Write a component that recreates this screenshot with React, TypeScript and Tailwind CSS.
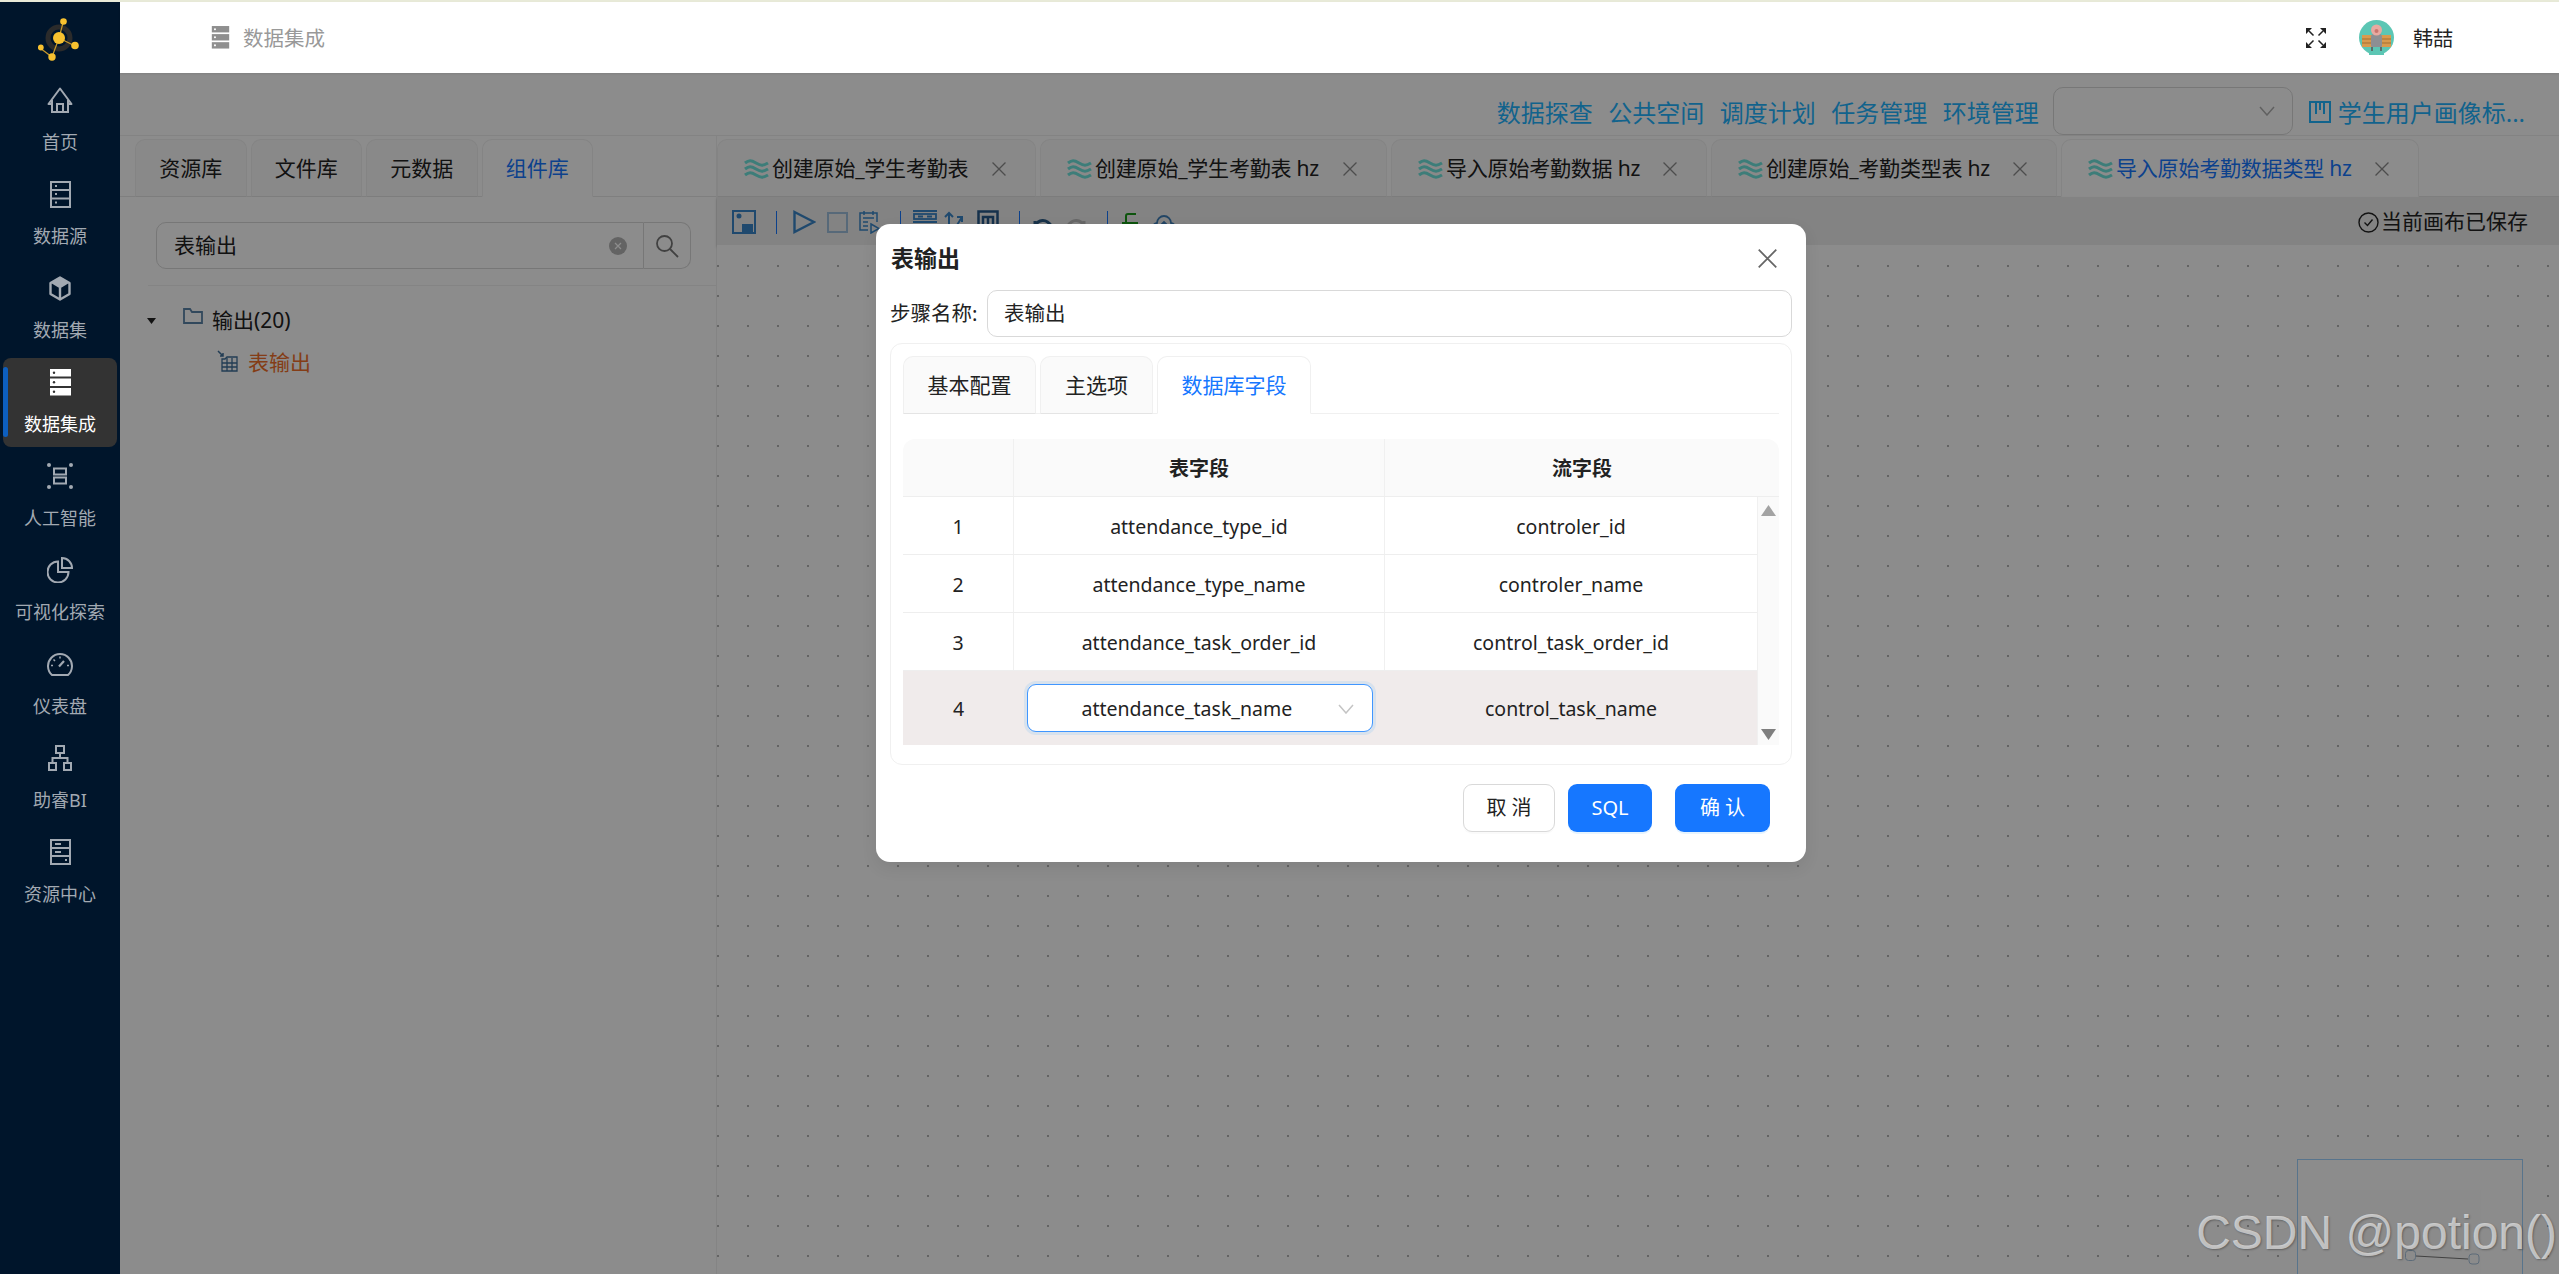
import React from "react";

const FONT = "font-['Noto_Sans','Noto_Sans_CJK_SC',sans-serif]";
const NAV_STROKE = "#a2a9b2";
const TOOL = "#3a86c8";
const LINK = "text-[#1fb4ff]";

function Logo() {
  return (
    <svg width="44" height="46" viewBox="0 0 44 46" fill="none">
      <circle cx="21" cy="22" r="11" stroke="#2b2b2b" strokeWidth="5" />
      <g stroke="#c99a2a" strokeWidth="1.2">
        <path d="M21 22 25.5 5" />
        <path d="M21 22 37 30" />
        <path d="M21 22 14 41 2 32" />
      </g>
      <g fill="#f7c12f">
        <circle cx="21" cy="22" r="6" />
        <circle cx="25.5" cy="5.5" r="3.3" />
        <circle cx="37" cy="29.5" r="3.8" />
        <circle cx="14" cy="41" r="3.7" />
        <circle cx="2.8" cy="31.5" r="2.9" />
      </g>
    </svg>
  );
}

function HomeIcon() {
  return (
    <svg width="26" height="26" viewBox="0 0 26 26" fill="none" stroke={NAV_STROKE} strokeWidth="2">
      <path d="M5 17H1.500L13 1.500 24.500 17H21" strokeLinejoin="round" />
      <path d="M5 13v12h16V13" />
      <path d="M10 25v-8h6v8" />
    </svg>
  );
}

function SourceIcon() {
  return (
    <svg width="21" height="27" viewBox="0 0 21 27" fill="none" stroke={NAV_STROKE} strokeWidth="2">
      <rect x="1" y="1" width="19" height="25" />
      <path d="M1 9h19M1 17.500h19" />
      <path d="M5 5h2M5 13h2M5 21.500h2" />
    </svg>
  );
}

function BoxIcon() {
  return (
    <svg width="22" height="25" viewBox="0 0 22 25" fill="none" stroke={NAV_STROKE} strokeWidth="2.400">
      <path d="M11 1.500 20.500 7v11L11 23.500 1.500 18V7z" strokeLinejoin="round" />
      <path d="M11 1.500 20 7l-9 5.500L2 7z" fill={NAV_STROKE} stroke="none" />
      <path d="M11 12v11" />
    </svg>
  );
}

function StackIcon({ color = "#fff", dot = "#333" }: { color?: string; dot?: string }) {
  return (
    <svg width="21" height="27" viewBox="0 0 21 27">
      {[0, 9.5, 19].map((y) => (
        <g key={y}>
          <rect x="0" y={y} width="21" height="7.500" fill={color} />
          <circle cx="4" cy={y + 3.75} r="1.200" fill={dot} />
        </g>
      ))}
    </svg>
  );
}

function AiIcon() {
  return (
    <svg width="26" height="26" viewBox="0 0 26 26" fill="none" stroke={NAV_STROKE}>
      <g fill={NAV_STROKE} stroke="none">
        <circle cx="2" cy="2" r="2" />
        <circle cx="24" cy="2" r="2" />
        <circle cx="2" cy="24" r="2" />
        <circle cx="24" cy="24" r="2" />
      </g>
      <rect x="7" y="5.500" width="12" height="6" strokeWidth="2" />
      <rect x="7" y="14.500" width="12" height="6" strokeWidth="2" />
    </svg>
  );
}

function PieIcon() {
  return (
    <svg width="26" height="26" viewBox="0 0 26 26" fill="none" stroke={NAV_STROKE} strokeWidth="2">
      <path d="M11 4.500a10.500 10.500 0 1 0 10.500 10.500H11z" />
      <path d="M15 1a10 10 0 0 1 10 10H15z" />
    </svg>
  );
}

function GaugeIcon() {
  return (
    <svg width="26" height="24" viewBox="0 0 26 24" fill="none" stroke={NAV_STROKE} strokeWidth="2">
      <path d="M5 23a12 12 0 1 1 16 0z" strokeLinejoin="round" />
      <path d="M12 14.500 17 9" strokeWidth="2.200" />
      <path d="M13 4.500v2M6.500 7.500l1.500 1.500M4 13.500h2M20 13.500h2" strokeWidth="1.500" />
    </svg>
  );
}

function TreeIcon() {
  return (
    <svg width="24" height="26" viewBox="0 0 24 26" fill="none" stroke={NAV_STROKE} strokeWidth="2">
      <rect x="8" y="1" width="8" height="7" />
      <rect x="1" y="18" width="7" height="7" />
      <rect x="16" y="18" width="7" height="7" />
      <path d="M12 8v5M4.500 18v-5h15v5" />
    </svg>
  );
}

function ResourceIcon() {
  return (
    <svg width="21" height="26" viewBox="0 0 21 26" fill="none" stroke={NAV_STROKE} strokeWidth="2">
      <rect x="1" y="1" width="19" height="24" />
      <path d="M1 9h19M1 17h19" />
      <path d="M5 5h6M5 13h6M15 21h2" />
    </svg>
  );
}

const NAV = [
  { label: "首页", icon: <HomeIcon /> },
  { label: "数据源", icon: <SourceIcon /> },
  { label: "数据集", icon: <BoxIcon /> },
  { label: "数据集成", icon: <StackIcon />, active: true },
  { label: "人工智能", icon: <AiIcon /> },
  { label: "可视化探索", icon: <PieIcon /> },
  { label: "仪表盘", icon: <GaugeIcon /> },
  { label: "助睿BI", icon: <TreeIcon /> },
  { label: "资源中心", icon: <ResourceIcon /> },
];

function Sidebar() {
  return (
    <aside className="flex w-[120px] shrink-0 flex-col gap-[5px] bg-[#00152b]">
      <div className="flex h-[69px] shrink-0 items-center justify-center pt-[4px]">
        <Logo />
      </div>
      {NAV.map((item) => (
        <div
          key={item.label}
          className={`relative mx-[3px] flex h-[89px] shrink-0 flex-col items-center rounded-lg pt-[8px] ${
            item.active ? "bg-[#333333] text-white" : "text-[#a2a9b2]"
          }`}
        >
          {item.active && (
            <span className="absolute left-0 top-[9px] h-[70px] w-[5px] rounded-sm bg-[#0d5fc0]" />
          )}
          <div className="flex h-[32px] items-center justify-center">{item.icon}</div>
          <div className="mt-[13px] text-[18px] leading-[26px] whitespace-nowrap">{item.label}</div>
        </div>
      ))}
    </aside>
  );
}

function Avatar() {
  return (
    <svg width="35" height="35" viewBox="0 0 35 35">
      <circle cx="17.500" cy="17.500" r="17.500" fill="#5cc6b4" />
      <rect x="3" y="15" width="29" height="12" fill="#d99a4e" />
      <path d="M3 19h29M3 23h29" stroke="#a56f30" strokeWidth="1" />
      <rect x="12" y="14" width="11" height="14" rx="3" fill="#8d8f93" />
      <circle cx="17.500" cy="10" r="5.500" fill="#e8a9a0" />
      <circle cx="17.500" cy="11" r="2" fill="#c9756e" />
      <path d="M10 27h15v8H10z" fill="#5cc6b4" />
      <path d="M13 27v4M22 27v4" stroke="#555" strokeWidth="1.500" />
    </svg>
  );
}

function ExpandIcon() {
  return (
    <svg width="20" height="20" viewBox="0 0 20 20" fill="#222" stroke="none">
      <path d="M0 0h6L0 6zM20 0h-6l6 6zM0 20h6l-6-6zM20 20h-6l6-6z" />
      <path d="M3 3l4.500 4.500M17 3l-4.500 4.500M3 17l4.500-4.500M17 17l-4.500-4.500" stroke="#222" strokeWidth="1.500" fill="none" />
    </svg>
  );
}

function Header() {
  return (
    <header className="z-20 flex h-[71px] shrink-0 items-center justify-between bg-white pl-[90px] pr-[106px] shadow-[0_1px_2px_rgba(0,0,0,0.08)]">
      <div className="flex items-center">
        <div className="scale-[0.85]">
          <StackIcon color="#8f8f8f" dot="#fff" />
        </div>
        <span className="ml-[12px] pt-[2px] text-[20.5px] text-[#999999]">数据集成</span>
      </div>
      <div className="flex items-center">
        <ExpandIcon />
        <div className="ml-[33px] flex">
          <Avatar />
        </div>
        <span className="ml-[19px] pt-[2px] text-[20px] text-[#222222]">韩喆</span>
      </div>
    </header>
  );
}

function LinkBar() {
  const links = ["数据探查", "公共空间", "调度计划", "任务管理", "环境管理"];
  return (
    <div className="flex h-[63px] shrink-0 items-start justify-end border-b border-[#eeeeee] pr-[34px] pt-[14px]">
      <div className="flex gap-[15.5px]">
        {links.map((l) => (
          <span key={l} className={`mt-[2px] text-[24px] leading-[48px] ${LINK}`}>
            {l}
          </span>
        ))}
      </div>
      <div className="ml-[14px] flex h-[48px] w-[240px] items-center justify-end rounded-[10px] border border-[#d9d9d9] pr-[17px]">
        <Chevron className="text-[#b0b0b0]" />
      </div>
      <svg className="ml-[16px] mt-[14px]" width="22" height="22" viewBox="0 0 22 22" fill="none" stroke="#1fb4ff" strokeWidth="2">
        <rect x="1" y="1" width="20" height="20" />
        <path d="M7 1v12M15 1v12M11 1v8" />
      </svg>
      <span className={`ml-[7px] mt-[2px] text-[24px] leading-[48px] ${LINK}`}>学生用户画像标...</span>
    </div>
  );
}

function Chevron({ className = "" }: { className?: string }) {
  return (
    <svg className={className} width="16" height="10" viewBox="0 0 16 10" fill="none" stroke="currentColor" strokeWidth="1.500">
      <path d="M1 1l7 8 7-8" />
    </svg>
  );
}

function Tab({
  children,
  active,
  className = "",
}: {
  children: React.ReactNode;
  active?: boolean;
  className?: string;
}) {
  return (
    <div
      className={`flex h-[58px] items-center rounded-t-[10px] border border-[#f0f0f0] pt-[2px] text-[21px] ${
        active ? "border-b-white bg-white text-[#1677ff]" : "border-b-[#e4e4e4] bg-[#fafafa] text-[#222222]"
      } ${className}`}
    >
      {children}
    </div>
  );
}

function LeftPanel() {
  const tabs = ["资源库", "文件库", "元数据", "组件库"];
  return (
    <div className="w-[597px] shrink-0 border-r border-[#f0f0f0]">
      <div className="flex h-[61px] items-end gap-[4px] border-b border-[#e8e8e8] pl-[15px]">
        {tabs.map((t, i) => (
          <Tab key={t} active={i === 3} className="w-[111.500px] justify-center -mb-px">
            {t}
          </Tab>
        ))}
      </div>
      <div className="ml-[36px] mt-[25px] flex h-[47px] w-[535px] text-[21px] text-[#222222]">
        <div className="flex flex-1 items-center justify-between rounded-l-[10px] border border-[#d9d9d9] pl-[17px] pr-[16px]">
          <span>表输出</span>
          <svg width="18" height="18" viewBox="0 0 18 18">
            <circle cx="9" cy="9" r="9" fill="#b4b4b4" />
            <path d="M6 6l6 6M12 6l-6 6" stroke="#fff" strokeWidth="1.300" />
          </svg>
        </div>
        <div className="flex w-[47px] items-center justify-center rounded-r-[10px] border border-l-0 border-[#d9d9d9]">
          <svg width="24" height="24" viewBox="0 0 24 24" fill="none" stroke="#777" strokeWidth="1.800">
            <circle cx="9.500" cy="9.500" r="7.500" />
            <path d="M15 15l8 8" />
          </svg>
        </div>
      </div>
      <div className="ml-[28px] mt-[16px] border-b border-[#f0f0f0]" />
      <div className="pt-[17px] text-[21px]">
        <div className="flex h-[36px] items-center pl-[27px]">
          <svg width="9" height="6" viewBox="0 0 9 6">
            <path d="M0 0h9L4.500 6z" fill="#222" />
          </svg>
          <svg className="-mt-[10px] ml-[27px]" width="20" height="16" viewBox="0 0 20 16" fill="none" stroke="#5a83a8" strokeWidth="1.800">
            <path d="M1 15V1h6l2 3h10v11z" />
          </svg>
          <span className="ml-[9px] text-[#222222]">输出(20)</span>
        </div>
        <div className="mt-[6px] flex h-[36px] items-center pl-[97px]">
          <svg className="-mt-[4px]" width="21" height="22" viewBox="0 0 21 22" fill="none" stroke="#3f6f99" strokeWidth="1.300">
            <path d="M1 1l5 5M6 3v3H3" strokeWidth="1.500" />
            <path d="M5 21V9h3l2-2h10v14z" />
            <path d="M5 13h15M5 17h15M10 8v13M15 8v13" />
          </svg>
          <span className="ml-[10px] text-[#f0702a]">表输出</span>
        </div>
      </div>
    </div>
  );
}

function Waves() {
  return (
    <svg className="mr-[3px] shrink-0" width="25" height="20" viewBox="0 0 25 20" fill="none" stroke="#6fe4dc" strokeWidth="3.200">
      <path d="M1 4c4-3 6-3 11 0s7 3 12 0" />
      <path d="M1 10c4-3 6-3 11 0s7 3 12 0" />
      <path d="M1 16c4-3 6-3 11 0s7 3 12 0" />
    </svg>
  );
}

function CloseIcon({ size = 14, color = "#8c8c8c" }: { size?: number; color?: string }) {
  return (
    <svg className="shrink-0" width={size} height={size} viewBox="0 0 13 13" fill="none" stroke={color} strokeWidth="1.200">
      <path d="M.5.5l12 12M12.500.5l-12 12" />
    </svg>
  );
}

function Toolbar() {
  return (
    <div className="flex h-[48px] shrink-0 items-center justify-between bg-[#eeeeee] pl-[15px] pr-[31px] pt-[2px] shadow-[0_2px_3px_rgba(0,0,0,0.2)]">
      <div className="flex items-center">
        <svg width="24" height="24" viewBox="0 0 24 24" fill="none" stroke={TOOL} strokeWidth="2">
          <path d="M1 1h22v22H1z" />
          <path d="M11 23v-8h9v8" fill={TOOL} />
          <circle cx="7" cy="6" r="1.500" fill={TOOL} />
        </svg>
        <span className="ml-[20px] h-[23px] w-px bg-[#1677ff]" />
        <svg className="ml-[16px]" width="23" height="24" viewBox="0 0 23 24" fill="none" stroke={TOOL} strokeWidth="2.400">
          <path d="M1.500 2 21 12 1.500 22z" />
        </svg>
        <svg className="ml-[11px]" width="21" height="21" viewBox="0 0 21 21" fill="none" stroke="#9fc0dc" strokeWidth="2">
          <rect x="1" y="1" width="19" height="19" />
        </svg>
        <svg className="ml-[11px]" width="21" height="24" viewBox="0 0 21 24" fill="none" stroke={TOOL} strokeWidth="1.500">
          <path d="M9 20H1V3h17v9M5 1v4M14 1v4M4 8h11M4 12h5M4 16h5" />
          <path d="M12 14l8 4.500-8 4.500z" />
        </svg>
        <span className="ml-[20px] h-[23px] w-px bg-[#1677ff]" />
        <svg className="ml-[12px]" width="24" height="24" viewBox="0 0 24 24" fill="none" stroke={TOOL} strokeWidth="1.800">
          <path d="M0 1h24M0 12h24" />
          <rect x="1" y="4" width="22" height="5" />
          <path d="M5 6.500h5M14 6.500h5" />
        </svg>
        <svg className="ml-[7px]" width="19" height="24" viewBox="0 0 19 24" fill="none" stroke={TOOL} strokeWidth="2">
          <path d="M5 23V3M1 7l4-4 4 4M10 20 18 7M13 7h5v5" />
        </svg>
        <svg className="ml-[14px]" width="22" height="24" viewBox="0 0 22 24" fill="none" stroke="#27598a" strokeWidth="2.500">
          <rect x="1.500" y="1.500" width="19" height="21" />
          <path d="M6 20V7h10v13M11 7v13" />
        </svg>
        <span className="ml-[20px] h-[23px] w-px bg-[#1677ff]" />
        <svg className="ml-[13px] mt-[5px]" width="20" height="16" viewBox="0 0 20 16" fill="none" stroke="#2e5d88" strokeWidth="3">
          <path d="M2 14V4M2 9C5 3 13 0 19 10" />
        </svg>
        <svg className="ml-[13px] mt-[5px]" width="20" height="16" viewBox="0 0 20 16" fill="none" stroke="#bcbcbc" strokeWidth="3">
          <path d="M18 14V4M18 9C15 3 7 0 1 10" />
        </svg>
        <span className="ml-[21px] h-[23px] w-px bg-[#1677ff]" />
        <svg className="ml-[14px] mt-[6px]" width="16" height="24" viewBox="0 0 16 24" fill="none" stroke="#1a9a1a" strokeWidth="2">
          <path d="M4 10V3a2 2 0 0 1 2-2h8" />
          <rect x="1" y="10" width="14" height="12" />
        </svg>
        <svg className="ml-[14px] mt-[6px]" width="24" height="24" viewBox="0 0 24 24" fill="none" stroke="#3f7fb8" strokeWidth="1.800">
          <path d="M6 20a5 5 0 0 1-1-10 7 7 0 0 1 14 0 5 5 0 0 1-1 10zM12 17v-7M8 13l4-4 4 4" />
        </svg>
      </div>
      <div className="flex items-center text-[21px] text-[#222222]">
        <svg className="mr-[2px]" width="21" height="21" viewBox="0 0 21 21" fill="none" stroke="#222" strokeWidth="1.400">
          <circle cx="10.500" cy="10.500" r="9.500" />
          <path d="M6.500 10.500l3 3 5-6" />
        </svg>
        当前画布已保存
      </div>
    </div>
  );
}

function Minimap() {
  return (
    <div className="absolute bottom-0 right-[36px] flex h-[115px] w-[226px] justify-center border border-b-0 border-[#a0d4ff] bg-white pt-[30px]">
      <div className="relative h-[85px] w-[141px] bg-[#fdfdfd]">
        <svg className="absolute left-[65px] top-[60px]" width="75" height="20" viewBox="0 0 75 20" fill="none" stroke="#a9c4dc">
          <rect x=".500" y=".500" width="10" height="10" rx="3" />
          <rect x="64" y="4" width="10" height="10" rx="3" />
          <path d="M11 6l52 3" stroke="#777" />
        </svg>
      </div>
    </div>
  );
}

function RightPanel() {
  const tabs = [
    { t: "创建原始_学生考勤表", w: "w-[319px]" },
    { t: "创建原始_学生考勤表 hz", w: "w-[347px]" },
    { t: "导入原始考勤数据 hz", w: "w-[316px]" },
    { t: "创建原始_考勤类型表 hz", w: "w-[346px]" },
    { t: "导入原始考勤数据类型 hz", w: "w-[358px]", active: true },
  ];
  return (
    <div className="flex min-w-0 flex-1 flex-col">
      <div className="flex h-[61px] shrink-0 items-end gap-[4px] border-b border-[#e8e8e8]">
        {tabs.map((t) => (
          <Tab key={t.t} active={t.active} className={`${t.w} -mb-px pl-[26px] pr-[29px]`}>
            <Waves />
            <span className="flex-1 whitespace-nowrap tracking-[-0.2px]">{t.t}</span>
            <CloseIcon />
          </Tab>
        ))}
      </div>
      <Toolbar />
      <div className="relative flex-1 bg-white bg-[radial-gradient(circle,#b4b4b4_1px,transparent_1.5px)] bg-size-[30px_30px] bg-position-[-14px_6px]">
        <Minimap />
      </div>
    </div>
  );
}

const COL_1 = "w-[111px] shrink-0 border-r border-[#f0f0f0]";
const COL_2 = "w-[371px] shrink-0 border-r border-[#f0f0f0]";

const ROWS = [
  ["1", "attendance_type_id", "controler_id"],
  ["2", "attendance_type_name", "controler_name"],
  ["3", "attendance_task_order_id", "control_task_order_id"],
];

function FieldTable() {
  return (
    <div className="mt-[25px] text-[19.5px] text-[#222222]">
      <div className="flex h-[58px] rounded-t-[12px] border-b border-[#eeeeee] bg-[#fafafa] text-[20px] font-bold">
        <div className={COL_1} />
        <div className={`${COL_2} flex items-center justify-center pt-[2px]`}>表字段</div>
        <div className="flex flex-1 items-center justify-center pt-[2px]">流字段</div>
      </div>
      <div className="flex">
        <div className="w-[854px] shrink-0">
          {ROWS.map((r) => (
            <div key={r[0]} className="flex h-[58px] border-b border-[#eeeeee] text-center">
              <div className={`${COL_1} flex items-center justify-center pt-[2px]`}>{r[0]}</div>
              <div className={`${COL_2} flex items-center justify-center pt-[2px]`}>{r[1]}</div>
              <div className="flex flex-1 items-center justify-center pt-[2px]">{r[2]}</div>
            </div>
          ))}
          <div className="flex h-[74px] bg-[#f0ebeb]">
            <div className="flex w-[111px] shrink-0 items-center justify-center pt-[2px]">4</div>
            <div className="flex w-[371px] shrink-0 items-center justify-center">
              <div className="flex h-[48px] w-[346px] items-center justify-between rounded-[9px] border border-[#4096ff] bg-white pl-[54px] pr-[18px] pt-[1px] shadow-[0_0_0_3px_rgba(5,145,255,0.1)]">
                <span>attendance_task_name</span>
                <Chevron className="text-[#c4c4c4]" />
              </div>
            </div>
            <div className="flex flex-1 items-center justify-center pt-[2px]">control_task_name</div>
          </div>
        </div>
        <div className="flex flex-1 flex-col items-center justify-between border-l border-[#f0f0f0] bg-[#fafafa] pb-[5px] pt-[8px]">
          <svg width="15" height="11" viewBox="0 0 15 11">
            <path d="M7.500 0 15 11H0z" fill="#a3a3a3" />
          </svg>
          <svg width="15" height="11" viewBox="0 0 15 11">
            <path d="M7.500 11 15 0H0z" fill="#7f7f7f" />
          </svg>
        </div>
      </div>
    </div>
  );
}

function Modal() {
  return (
    <div className="flex h-[638px] w-[930px] flex-col rounded-[14px] bg-white px-[14px] pt-[16px] text-[#222222] shadow-[0_6px_16px_rgba(0,0,0,0.08)]">
      <div className="flex h-[36px] shrink-0 items-center justify-between pl-px pr-[15px]">
        <span className="text-[23px] font-bold">表输出</span>
        <CloseIcon size={19} color="#666" />
      </div>
      <div className="mt-[14px] flex shrink-0 items-center text-[20.5px]">
        <span className="w-[97px] shrink-0 whitespace-nowrap">步骤名称:</span>
        <div className="flex h-[47px] flex-1 items-center rounded-[10px] border border-[#d9d9d9] pl-[16px]">表输出</div>
      </div>
      <div className="mt-[6px] h-[422px] shrink-0 rounded-[12px] border border-[#f0f0f0] px-[12px] pt-[12px]">
        <div className="flex gap-[4px] border-b border-[#f0f0f0]">
          <Tab className="w-[133px] justify-center -mb-px">基本配置</Tab>
          <Tab className="w-[113px] justify-center -mb-px">主选项</Tab>
          <Tab active className="w-[154px] justify-center -mb-px">
            数据库字段
          </Tab>
        </div>
        <FieldTable />
      </div>
      <div className="mt-[19px] flex justify-end pr-[22px] text-[20px]">
        <div className="flex h-[48px] w-[92px] items-center justify-center rounded-[9px] border border-[#d9d9d9] bg-white shadow-[0_2px_0_rgba(0,0,0,0.02)]">
          取 消
        </div>
        <div className="ml-[13px] flex h-[48px] w-[84px] items-center justify-center rounded-[9px] bg-[#1677ff] text-white shadow-[0_2px_0_rgba(5,145,255,0.1)]">
          SQL
        </div>
        <div className="ml-[23px] flex h-[48px] w-[95px] items-center justify-center rounded-[9px] bg-[#1677ff] text-white shadow-[0_2px_0_rgba(5,145,255,0.1)]">
          确 认
        </div>
      </div>
    </div>
  );
}

export default function App() {
  return (
    <div className={`relative flex h-screen w-full flex-col overflow-hidden bg-white ${FONT}`}>
      <div className="h-[2px] shrink-0 bg-[#e8ead8]" />
      <div className="flex min-h-0 flex-1">
        <Sidebar />
        <div className="flex min-w-0 flex-1 flex-col">
          <Header />
          <div className="relative flex min-h-0 flex-1 flex-col">
            <LinkBar />
            <div className="flex min-h-0 flex-1">
              <LeftPanel />
              <RightPanel />
            </div>
            <div className="absolute inset-0 z-10 bg-black/45 pl-[756px] pt-[151px]">
              <Modal />
            </div>
          </div>
        </div>
      </div>
      <div className="absolute bottom-[13px] right-[2px] z-30 font-['Liberation_Sans',sans-serif] text-[48px] leading-[56px] text-white/60 [text-shadow:1px_1px_2px_rgba(0,0,0,0.3)]">
        CSDN @potion()
      </div>
    </div>
  );
}
